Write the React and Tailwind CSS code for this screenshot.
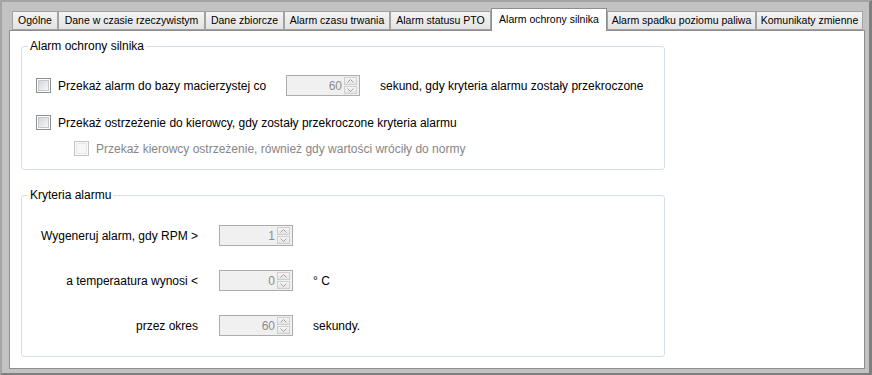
import React from 'react';

const tabs = [
  ['Ogólne', 46],
  ['Dane w czasie rzeczywistym', 147],
  ['Dane zbiorcze', 79],
  ['Alarm czasu trwania', 106],
  ['Alarm statusu PTO', 101],
  ['Alarm ochrony silnika', 116, true],
  ['Alarm spadku poziomu paliwa', 149],
  ['Komunikaty zmienne', 107],
];

function Checkbox({ disabled }) {
  return (
    <span
      className={`flex h-[15px] w-[15px] shrink-0 items-center justify-center border ${
        disabled ? 'border-[#c4c4c4] bg-[#fbfbfb]' : 'border-[#8e8f8f] bg-white'
      }`}
    >
      <span
        className={`h-[11px] w-[11px] border ${
          disabled
            ? 'border-[#e6e6e6] bg-[#f6f6f6]'
            : 'border-[#c6c9cc] bg-gradient-to-br from-[#d4d7db] to-[#f7f7f7]'
        }`}
      />
    </span>
  );
}

function SpinBtn({ up }) {
  return (
    <span className="flex h-[8px] w-[13px] items-center justify-center border border-[#cfcfcf] bg-gradient-to-b from-[#f6f6f6] to-[#e4e4e4]">
      <svg width="7" height="4" viewBox="0 0 7 4">
        {up ? (
          <path d="M0.5 3.5 L3.5 0.5 L6.5 3.5" fill="none" stroke="#a3a3a3" strokeWidth="1" />
        ) : (
          <path d="M0.5 0.5 L3.5 3.5 L6.5 0.5" fill="none" stroke="#a3a3a3" strokeWidth="1" />
        )}
      </svg>
    </span>
  );
}

function Spin({ value }) {
  return (
    <div className="flex h-[21px] w-[74px] shrink-0 items-center border border-[#acacac] bg-[#f0f0f0] pr-[2px]">
      <span className="flex-1 pr-[2px] text-right text-[#8c8c8c]">{value}</span>
      <div className="flex flex-col gap-[1px]">
        <SpinBtn up />
        <SpinBtn />
      </div>
    </div>
  );
}

function Group({ title, className, children }) {
  return (
    <fieldset className={`w-[644px] rounded-[3px] border border-[#d5dfe5] ${className}`}>
      <legend className="ml-[6px] px-[2px] leading-[14px]">{title}</legend>
      {children}
    </fieldset>
  );
}

export default function App() {
  return (
    <div
      className="flex h-[375px] w-[872px] flex-col border-l-2 border-t-2 border-r-[3px] border-b-2 border-l-[#a4a4a4] border-t-[#a4a4a4] border-r-[#7f7f7f] border-b-[#7f7f7f] bg-[#c2c2c2] pl-[7px] pt-[6px] pr-[4px] pb-[4px] text-[12px] text-black"
      style={{ fontFamily: '"Liberation Sans", Arial, sans-serif' }}
    >
      <div className="flex h-[22px] items-end pl-[3px]">
        {tabs.map(([name, w, sel]) =>
          sel ? (
            <div
              key={name}
              style={{ width: w }}
              className="relative z-10 -mb-px flex h-[23px] justify-center whitespace-nowrap border border-b-0 border-[#8c8e94] bg-white pt-[3px] text-[10.5px]"
            >
              {name}
            </div>
          ) : (
            <div
              key={name}
              style={{ width: w }}
              className="flex h-[19px] items-center justify-center whitespace-nowrap border border-[#a2a2a2] bg-gradient-to-b from-[#f4f4f4] to-[#e3e3e3] text-[10.5px]"
            >
              {name}
            </div>
          )
        )}
      </div>
      <div className="flex flex-1 flex-col border border-[#8c8e94] bg-white pl-[11px]">
        <Group title="Alarm ochrony silnika" className="mt-[8px] pb-[13px]">
          <div className="pl-[14px]">
            <div className="mt-[22px] flex h-[21px] items-center">
              <Checkbox />
              <span className="ml-[7px] w-[228px]">Przekaż alarm do bazy macierzystej co</span>
              <Spin value="60" />
              <span className="ml-[20px]">sekund, gdy kryteria alarmu zostały przekroczone</span>
            </div>
            <div className="mt-[19px] flex h-[15px] items-center">
              <Checkbox />
              <span className="ml-[7px]">
                Przekaż ostrzeżenie do kierowcy, gdy zostały przekroczone kryteria alarmu
              </span>
            </div>
            <div className="ml-[38px] mt-[11px] flex h-[15px] items-center">
              <Checkbox disabled />
              <span className="ml-[7px] text-[#868686]">
                Przekaż kierowcy ostrzeżenie, również gdy wartości wróciły do normy
              </span>
            </div>
          </div>
        </Group>
        <Group title="Kryteria alarmu" className="mt-[18px] pb-[20px]">
          <div className="mt-[23px] flex h-[21px] items-center">
            <span className="w-[176px] text-right">Wygeneruj alarm, gdy RPM &gt;</span>
            <span className="ml-[21px]">
              <Spin value="1" />
            </span>
          </div>
          <div className="mt-[24px] flex h-[21px] items-center">
            <span className="w-[176px] text-right">a temperaatura wynosi &lt;</span>
            <span className="ml-[21px]">
              <Spin value="0" />
            </span>
            <span className="ml-[20px]">° C</span>
          </div>
          <div className="mt-[24px] flex h-[21px] items-center">
            <span className="w-[176px] text-right">przez okres</span>
            <span className="ml-[21px]">
              <Spin value="60" />
            </span>
            <span className="ml-[20px]">sekundy.</span>
          </div>
        </Group>
      </div>
    </div>
  );
}
